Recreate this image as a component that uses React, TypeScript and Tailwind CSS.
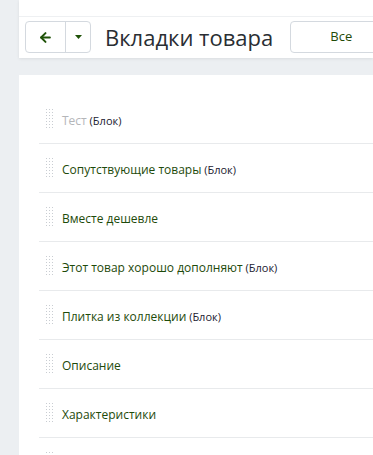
import { ArrowLeft } from 'lucide-react';

const items: { title: string; block?: boolean; disabled?: boolean }[] = [
  { title: 'Тест', block: true, disabled: true },
  { title: 'Сопутствующие товары', block: true },
  { title: 'Вместе дешевле' },
  { title: 'Этот товар хорошо дополняют', block: true },
  { title: 'Плитка из коллекции', block: true },
  { title: 'Описание' },
  { title: 'Характеристики' },
  { title: '' },
];

function DragHandle() {
  const dots = [];
  for (let r = 0; r < 7; r++) {
    for (let c = 0; c < 3; c++) {
      dots.push(<rect key={`${r}-${c}`} x={c * 3} y={r * 3} width="1" height="1" fill="#c9cdd2" />);
    }
  }
  return (
    <svg width="8" height="20" viewBox="0 0 8 20" className="shrink-0">
      {dots}
    </svg>
  );
}

export default function App() {
  return (
    <div className="min-h-[455px] bg-[#eceff2] pl-[19px] font-['Open_Sans',sans-serif] overflow-hidden">
      {/* Header */}
      <div className="bg-white shadow-[0_1px_3px_rgba(0,0,0,0.08)]">
        <div className="h-[17px] border-b border-[#eef0f2] overflow-hidden">
          <div className="-mt-[16px] pl-[150px] text-[12px] text-[#333] whitespace-nowrap">
            Настройки магазина / Товары и услуги
          </div>
        </div>
        <div className="flex items-center pl-[6px] pt-[4px] pb-[5px]">
          <div className="flex h-[32px] rounded-[4px] border border-[#d4d9df]">
            <button className="w-[40px] flex items-center justify-center border-r border-[#d4d9df]">
              <ArrowLeft size={15} strokeWidth={3.2} className="text-[#1f5208]" />
            </button>
            <button className="w-[24px] flex items-center justify-center">
              <svg width="7" height="4" viewBox="0 0 7 4">
                <path d="M0 0h7L3.5 4z" fill="#1f5208" />
              </svg>
            </button>
          </div>
          <h1 className="ml-[14px] text-[22px] leading-none text-[#2a2e33] whitespace-nowrap">
            Вкладки товара
          </h1>
          <button className="ml-[17px] h-[32px] w-[110px] shrink-0 rounded-[4px] border border-[#d4d9df] text-[13px] text-[#1f4a08] pr-[8px]">
            Все
          </button>
        </div>
      </div>

      {/* List */}
      <div className="mt-[17px] bg-white pl-[20px] pt-[20px]">
        {items.map((it, i) => (
          <div
            key={i}
            className="flex h-[49px] items-center border-b border-[#e8eaec] pl-[7px] gap-[8px]"
          >
            <DragHandle />
            {it.title && (
              <span className="pt-[3px] text-[12px] whitespace-nowrap">
                <span className={it.disabled ? 'text-[#b4b6b9]' : 'text-[#1e4a0a]'}>{it.title}</span>
                {it.block && <span className="text-[11px] text-[#1c2130]"> (Блок)</span>}
              </span>
            )}
          </div>
        ))}
      </div>
    </div>
  );
}
